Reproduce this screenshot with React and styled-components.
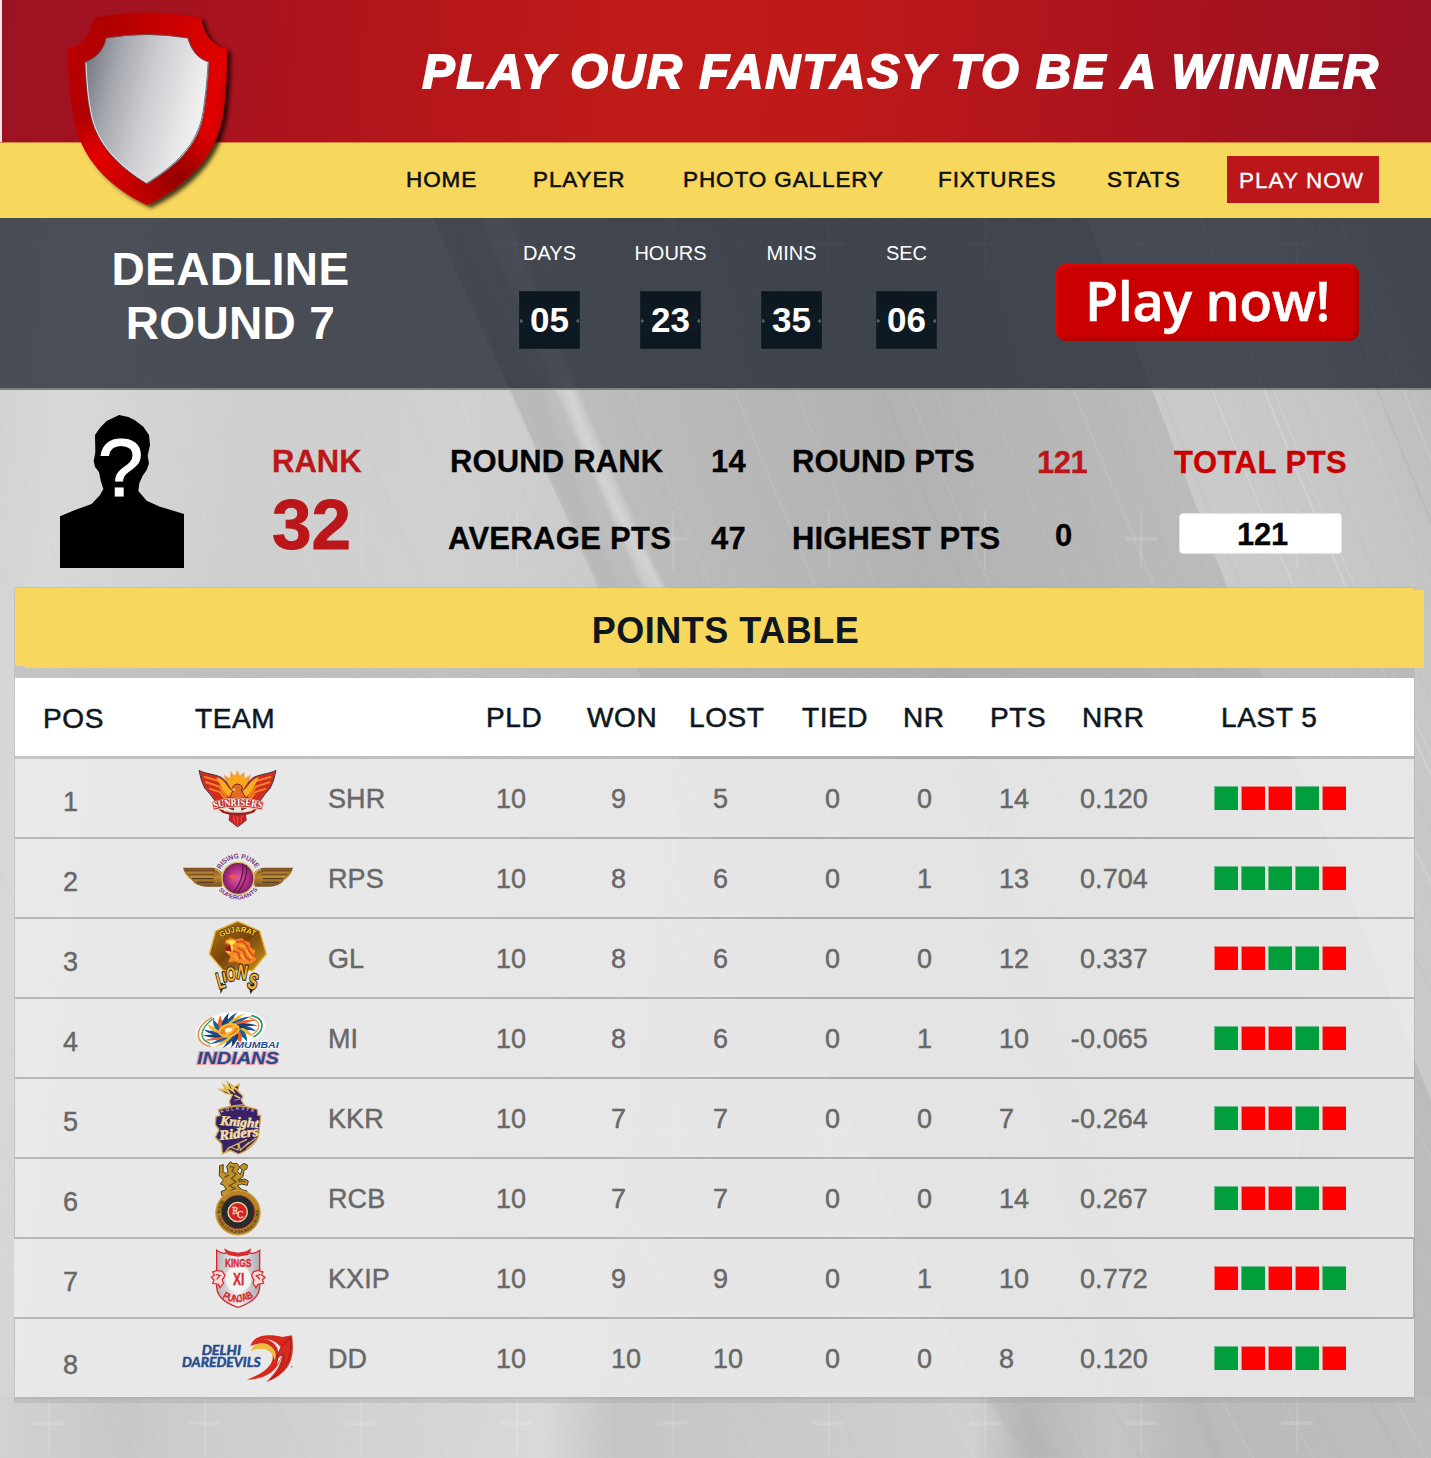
import React from "react";
import styled, { createGlobalStyle, css } from "styled-components";

const Global = createGlobalStyle`
  * { box-sizing: border-box; }
  body { margin: 0; background: #c6c6c6; font-family: "Liberation Sans", Arial, sans-serif; }
  svg { display: block; }
`;

const Page = styled.div`
  position: relative;
  width: 1431px;
  height: 1458px;
  overflow: hidden;
`;

const BackdropSvg = styled.svg`
  position: absolute;
  inset: 0;
  z-index: 0;
`;

const Content = styled.div`
  position: relative;
  z-index: 1;
`;

const Hero = styled.header`
  height: 142px;
  border-left: 2px solid #f1e6e8;
  background: linear-gradient(93deg, #9d1223 0%, #a41320 12%, #b3151b 27%, #bf1b18 44%, #bf1a18 56%, #b6161b 68%, #a8131e 82%, #991123 100%);
  display: flex;
  justify-content: flex-end;
  padding: 43px 51px 0 0;
`;

const Slogan = styled.h1`
  margin: 0;
  color: #fff;
  font: italic 700 48.5px/56px "Liberation Sans", Arial, sans-serif;
  letter-spacing: 1.95px;
  white-space: nowrap;
  -webkit-text-stroke: 1.8px #fff;
`;

const NavBar = styled.nav`
  height: 76px;
  background: #f8d75d;
  border-top: 1px solid #e3823f;
  display: grid;
  grid-template-columns: 127px 150px 255px 169px 120px 152px;
  padding: 13px 0 0 406px;
  align-items: start;
`;

const navText = css`
  font-size: 22.5px;
  line-height: 48px;
  letter-spacing: 0.9px;
  white-space: nowrap;
  text-decoration: none;
`;

const NavLink = styled.a`
  ${navText}
  color: #0c0f12;
  -webkit-text-stroke: 0.55px #0c0f12;
`;

const NavButton = styled.a`
  ${navText}
  height: 47px;
  line-height: 49px;
  padding-left: 12px;
  letter-spacing: 1.05px;
  background: #bb171a;
  color: #fff;
  -webkit-text-stroke: 0.3px #fff;
`;

const ShieldSvg = styled.svg`
  position: absolute;
  left: 55px;
  top: 0;
  z-index: 2;
`;

const Deadline = styled.section`
  height: 172px;
  border-bottom: 2px solid #808080;
  background: rgba(14, 20, 31, 0.7);
  background-clip: padding-box;
  display: flex;
  align-items: flex-start;
`;

const DeadlineTitle = styled.h2`
  margin: 24px 0 0 80px;
  width: 301px;
  color: #fff;
  text-align: center;
  font-size: 46px;
  line-height: 54px;
  font-weight: 700;
  letter-spacing: 0.35px;
`;

const Countdown = styled.div`
  margin: 24px 0 0 138px;
  width: 418px;
  display: grid;
  grid-template-columns: 61px 61px 61px 61px;
  column-gap: 60px;
`;

const Unit = styled.div`
  display: flex;
  flex-direction: column;
  align-items: center;
  margin-left: ${(p) => p.$shift || 0}px;
  width: 61px;
`;

const UnitLabel = styled.span`
  color: #fff;
  font-size: 20px;
  line-height: 23px;
`;

const UnitTile = styled.div`
  margin-top: 26px;
  width: 61px;
  height: 58px;
  background:
    radial-gradient(circle at 2px 30px, #56616a 0 1.3px, transparent 2px),
    radial-gradient(circle at 59px 30px, #56616a 0 1.3px, transparent 2px),
    linear-gradient(#0d161d, #0e1a24 50%, #0b1820);
  box-shadow: inset 0 0 0 1px #17212a;
  color: #fff;
  font-size: 35px;
  line-height: 58px;
  font-weight: 700;
  text-align: center;
`;

const PlayButton = styled.button`
  margin: 46px 0 0 119px;
  width: 303px;
  height: 77px;
  border: 0;
  padding: 0;
  border-radius: 10px;
  background: #ca0000;
  box-shadow: inset 2px 2px 3px #e80508, inset -2px -2px 4px #a00000;
  color: #fff;
  font: 600 54px/70px "Open Sans", "Noto Sans", sans-serif;
  letter-spacing: -0.4px;
  white-space: nowrap;
  -webkit-text-stroke: 0.5px #fff;
`;

const ButtonText = styled.span`
  display: block;
  height: 77px;
  line-height: 73px;
`;

const Summary = styled.section`
  height: 197px;
  display: grid;
  grid-template-columns: 212px 176px 263px 81px 245px 137px 200px;
  padding-left: 60px;
  align-items: start;
`;

const Avatar = styled.svg`
  margin-top: 25px;
`;

const StatColumn = styled.div`
  display: flex;
  flex-direction: column;
  align-items: flex-start;
  gap: 45px;
  padding-top: ${(p) => p.$top || 56}px;
`;

const Stat = styled.span`
  color: ${(p) => p.$color || "#040404"};
  font-size: 31px;
  line-height: 32px;
  font-weight: 700;
  letter-spacing: ${(p) => p.$spacing ?? 0.15}px;
  white-space: nowrap;
  margin-left: ${(p) => p.$indent || 0}px;
  margin-top: ${(p) => p.$lift || 0}px;
  -webkit-text-stroke: 0.3px;
`;

const RankColumn = styled(StatColumn)`
  gap: 9px;
`;

const RankNumber = styled.strong`
  color: #bb171a;
  font-size: 71px;
  line-height: 76px;
  -webkit-text-stroke: 1px #bb171a;
`;

const TotalColumn = styled(StatColumn)`
  gap: 34px;
`;

const TotalBox = styled.div`
  margin-left: 5px;
  width: 163px;
  height: 41px;
  border: 1px solid #e4e4e4;
  border-radius: 4px;
  background: #fff;
  display: flex;
  justify-content: center;
  padding: 5px 0 0 4px;
`;

const TablePanel = styled.main`
  margin-left: 14px;
  width: 1401px;
  height: 816px;
  padding: 1px 1px 0;
  background: rgba(165, 165, 165, 0.38);
`;

const TableTitle = styled.h2`
  position: relative;
  margin: 0;
  width: 1399px;
  height: 78px;
  background: #f8d75d;
  color: #0e171f;
  font-size: 36px;
  line-height: 85px;
  letter-spacing: 0.5px;
  text-align: center;
  &::after {
    content: "";
    position: absolute;
    left: 10px;
    top: 2px;
    width: 1399px;
    height: 78px;
    background: #f8d75d;
  }
`;

const TitleText = styled.span`
  position: relative;
  z-index: 1;
  left: 11px;
`;

const HeadRow = styled.div`
  margin-top: 12px;
  height: 78px;
  background: #fff;
  display: grid;
  grid-template-columns: 152px 291px 101px 102px 113px 101px 87px 92px 139px 178px;
  padding: 0 0 0 28px;
`;

const HeadCell = styled.span`
  color: #0e171f;
  font-size: 28px;
  line-height: ${(p) => (p.$low ? 81 : 79)}px;
  letter-spacing: 0.6px;
  white-space: nowrap;
  -webkit-text-stroke: 0.55px #0e171f;
`;

const Rows = styled.div`
  display: flex;
  flex-direction: column;
  gap: 2px;
  margin-top: 3px;
`;

const Row = styled.div`
  height: 78px;
  margin-left: ${(p) => p.$shift || 0}px;
  width: 1399px;
  background: rgba(244, 244, 244, 0.76);
  display: grid;
  grid-template-columns: 119px 146px 168px 115px 102px 112px 92px 82px 60px 89px 66px 132px;
  padding-left: ${(p) => 48 - (p.$shift || 0)}px;
  align-items: center;
  box-shadow: 0 2px 0 rgba(150, 150, 150, 0.22);
`;

const Cell = styled.span`
  color: #686868;
  font-size: 27px;
  line-height: 30px;
  letter-spacing: 0.1px;
  white-space: nowrap;
  padding-top: ${(p) => p.$drop || 2}px;
  justify-self: ${(p) => (p.$end ? "end" : "start")};
  -webkit-text-stroke: 0.45px #686868;
`;

const Form = styled.div`
  display: flex;
  gap: 3px;
`;

const Result = styled.i`
  width: 24px;
  height: 24px;
  background: ${(p) => (p.$win ? "#009f3c" : "#ff0000")};
  box-shadow: inset 1px 1px 0 ${(p) => (p.$win ? "#6dbd87" : "#ee8484")};
`;

const streaks = Array.from({ length: 84 }, (_, i) => {
  const x = -500 + i * 23 + ((i * 37) % 17);
  const fade = x < 380 ? 0.3 : x > 1060 ? 1.2 : 0.55;
  return { x, o: (0.05 + ((i * 13) % 7) * 0.022) * fade, w: 0.7 + ((i * 11) % 4) * 0.5 };
});
const crossX = [49, 205, 361, 517, 673, 829, 985, 1141, 1297];
const crossY = [244, 539, 834, 1129, 1423];

function Backdrop() {
  return (
    <BackdropSvg width="1431" height="1458" viewBox="0 0 1431 1458" aria-hidden="true">
      <defs>
        <linearGradient id="base" x1="0" y1="0" x2="1" y2=".12">
          <stop offset="0" stopColor="#cfcfcf" />
          <stop offset=".08" stopColor="#d8d8d8" />
          <stop offset=".2" stopColor="#cfcfcf" />
          <stop offset=".36" stopColor="#d0d0d0" />
          <stop offset=".6" stopColor="#c2c2c2" />
          <stop offset="1" stopColor="#c6c6c6" />
        </linearGradient>
        <linearGradient id="shade" gradientUnits="userSpaceOnUse" x1="470" y1="430" x2="1180" y2="250">
          <stop offset="0" stopColor="#c0c0c0" />
          <stop offset=".18" stopColor="#bcbcbc" />
          <stop offset=".55" stopColor="#b2b2b2" />
          <stop offset="1" stopColor="#bcbcbc" />
        </linearGradient>
        <linearGradient id="glow" gradientUnits="userSpaceOnUse" x1="1165" y1="430" x2="1420" y2="330">
          <stop offset="0" stopColor="#cacaca" />
          <stop offset=".6" stopColor="#c6c6c6" />
          <stop offset="1" stopColor="#bcbcbc" />
        </linearGradient>
        <linearGradient id="floor" x1="0" y1="0" x2="1" y2="0">
          <stop offset="0" stopColor="#d2d2d2" />
          <stop offset=".09" stopColor="#c7c7c7" />
          <stop offset=".11" stopColor="#cbcbcb" />
          <stop offset=".38" stopColor="#d9d9d9" />
          <stop offset=".43" stopColor="#c5c5c5" />
          <stop offset=".6" stopColor="#cccccc" />
          <stop offset=".68" stopColor="#d0d0d0" />
          <stop offset=".72" stopColor="#b8b8b8" />
          <stop offset=".78" stopColor="#c5c5c5" />
          <stop offset=".83" stopColor="#bababa" />
          <stop offset="1" stopColor="#bdbdbd" />
        </linearGradient>
        <filter id="soft"><feGaussianBlur stdDeviation="2" /></filter>
      </defs>
      <rect width="1431" height="1458" fill="url(#base)" />
      <path d="M425 200 Q468 300 510 390 L598 587 L980 1397 H1431 V200Z" fill="url(#shade)" />
      <path d="M1080 200 L1152 390 L1227 587 L1431 1100 V200Z" fill="url(#glow)" />
      <path d="M505 200 C535 300 610 470 668 600 L650 600 C595 480 535 340 480 218Z" fill="#d8d8d8" opacity=".6" filter="url(#soft)" />
      <path d="M565 380 C585 450 620 520 668 600" fill="none" stroke="#dadada" strokeWidth="6" opacity=".5" filter="url(#soft)" />
      <path d="M450 218 Q500 330 543 390 Q570 470 620 587 H600 L510 390Z" fill="#b0b0b0" opacity=".35" filter="url(#soft)" />
      <rect y="1397" width="1431" height="61" fill="url(#floor)" />
      <path d="M985 1397 L1028 1458 H1060 L1020 1397Z M1190 1397 L1212 1458 H1225 L1200 1397Z" fill="#b2b2b2" opacity=".4" filter="url(#soft)" />
      {streaks.map((s, i) => (
        <path key={i} d={`M${s.x} 200 q90 260 230 560 t360 700`} fill="none" stroke={i % 3 ? "#fff" : "#a0a0a0"} strokeWidth={s.w} opacity={s.o} />
      ))}
      {crossY.map((y) =>
        crossX.map((x) => {
          const dim = x < 450 && y < 1400 ? 0.35 : 0.9;
          return (
            <g key={`${x}-${y}`} stroke="#fff" opacity={dim}>
              <path d={`M${x} ${y - 29} v60`} strokeWidth="1" opacity=".25" />
              <path d={`M${x - 16} ${y} h32`} strokeWidth="4" opacity=".13" />
            </g>
          );
        })
      )}
    </BackdropSvg>
  );
}

const shieldOutline = "M93 18 Q147 7 201 18 C203 33 212 46 227 49 C227 75 226 94 223 115 C216 158 185 187 147 205 C108 187 81 157 74 120 C70 98 68 75 67 49 C82 46 92 33 93 18Z";

function Shield() {
  return (
    <ShieldSvg width="190" height="216" viewBox="55 0 190 216" aria-hidden="true">
      <defs>
        <linearGradient id="rim" x1="0" y1=".25" x2="1" y2=".5">
          <stop offset="0" stopColor="#bd0000" />
          <stop offset=".18" stopColor="#ae0000" />
          <stop offset=".5" stopColor="#c60000" />
          <stop offset=".92" stopColor="#e20000" />
          <stop offset="1" stopColor="#c60000" />
        </linearGradient>
        <radialGradient id="rimHot" gradientUnits="userSpaceOnUse" cx="98" cy="158" r="46">
          <stop offset="0" stopColor="#e60000" />
          <stop offset="1" stopColor="#e60000" stopOpacity="0" />
        </radialGradient>
        <radialGradient id="rimDark" gradientUnits="userSpaceOnUse" cx="180" cy="180" r="56">
          <stop offset="0" stopColor="#920000" />
          <stop offset="1" stopColor="#920000" stopOpacity="0" />
        </radialGradient>
        <linearGradient id="steel" x1="0" y1=".25" x2="1" y2=".55">
          <stop offset="0" stopColor="#777b87" />
          <stop offset=".22" stopColor="#a5a7ae" />
          <stop offset=".5" stopColor="#cbccd0" />
          <stop offset=".85" stopColor="#ebebec" />
          <stop offset="1" stopColor="#f4f4f4" />
        </linearGradient>
        <filter id="drop" x="-20%" y="-20%" width="150%" height="150%">
          <feDropShadow dx="4" dy="3" stdDeviation="2.2" floodColor="#000" floodOpacity=".75" />
        </filter>
      </defs>
      <g filter="url(#drop)">
        <path d={shieldOutline} fill="url(#rim)" />
      </g>
      <path d={shieldOutline} fill="url(#rimHot)" />
      <path d={shieldOutline} fill="url(#rimDark)" />
      <path d="M106 38 Q147 31 188 38 C191 50 198 59 209 62 C208 82 206 98 204 112 C199 147 174 167 147 184 C119 167 96 145 90 112 C87 96 86 80 85 62 C96 58 104 50 106 38Z" fill="url(#steel)" stroke="#71464a" strokeWidth="1" />
      <path d="M86 63 C87 84 88 98 91 112 C97 145 119 165 147 182" fill="none" stroke="#e4e4e4" strokeWidth="1" />
      <path d="M208 63 C207 84 205 98 203 112 C198 145 174 166 147 183" fill="none" stroke="#6f7880" strokeWidth="1" />
    </ShieldSvg>
  );
}

function Silhouette() {
  return (
    <Avatar width="124" height="153" viewBox="180 600 372 459" role="img" aria-label="player">
      <path d="M357 600 L385 606 L405 616 L430 635 L447 660 L450 690 L443 722 L447 745 L440 765 L428 782 L418 805 L415 828 L440 857 L480 875 L520 887 L552 897 V1059 H180 V904 L225 885 L275 867 L300 840 L310 822 L303 800 L297 772 L285 755 L281 738 L286 712 L285 660 L300 638 L320 618 L345 606Z" fill="#000" />
      <text x="362" y="843" textAnchor="middle" fontSize="246" fontFamily="Liberation Sans, Arial, sans-serif" fill="#fff" stroke="#fff" strokeWidth="3">?</text>
    </Avatar>
  );
}

const Logo = ({ top, label, children }) => (
  <svg width="112" height="78" viewBox={`36 ${top} 336 234`} role="img" aria-label={label}>
    {children}
  </svg>
);

const Sunrisers = () => (
  <Logo top={-3} label="Sunrisers">
    <path d="M154 80 L166 62 L162 44 L180 56 L182 34 L195 50 L202 30 L209 50 L222 36 L224 56 L242 44 L238 62 L252 80Z" fill="#f2953f" stroke="#f8bd75" strokeWidth="2" />
    <circle cx="202" cy="76" r="32" fill="#f9a51d" />
    <path d="M87 31 C106 42 140 43 157 54 C172 65 176 82 188 92 L190 150 L138 126 L118 100 L104 84 L94 60Z" fill="#ce2e1f" stroke="#463a49" strokeWidth="3" />
    <path d="M318 31 C299 42 264 43 248 54 C233 65 229 82 217 92 L215 150 L268 126 L287 100 L301 84 L311 60Z" fill="#ce2e1f" stroke="#463a49" strokeWidth="3" />
    <path d="M102 50 L150 64 L174 100 M106 66 L148 80 L170 112 M118 86 L150 96 L168 122 M304 50 L255 64 L231 100 M300 66 L258 80 L236 112 M288 86 L256 96 L238 122" fill="none" stroke="#f58220" strokeWidth="6" />
    <path d="M139 52 C166 58 169 82 188 94 L190 116 C162 109 153 77 139 52 M267 52 C240 58 237 82 217 94 L215 116 C244 109 252 77 267 52" fill="#fdae20" />
    <path d="M190 88 Q184 75 202 72 Q224 76 214 91 L228 114 H179Z" fill="#e66822" stroke="#7b2420" strokeWidth="3" />
    <path d="M193 83 L185 91 L196 92Z" fill="#ffd144" />
    <path d="M180 158 H226 L229 181 L203 201 L177 181Z" fill="#c82327" stroke="#5b2630" strokeWidth="2" />
    <path d="M203 158 V198 M190 165 L194 188 M217 165 L212 188" stroke="#ed5338" strokeWidth="3" />
    <path d="M142 145 Q203 168 264 145 L250 158 Q203 176 157 158Z" fill="#9a2224" />
    <path d="M162 151 Q203 162 246 151" stroke="#f5d8bd" strokeWidth="4" fill="none" />
    <path d="M126 127 Q203 101 281 127 L276 150 Q203 131 131 150Z" fill="#c6392f" stroke="#f0c2a8" strokeWidth="3" />
    <path id="srArc" d="M132 146 Q203 128 278 146" fill="none" />
    <text fontFamily="Liberation Serif, serif" fontWeight="700" fontSize="30" fill="#fff" stroke="#b9322c" strokeWidth="3" paintOrder="stroke"><textPath href="#srArc" textLength="144" lengthAdjust="spacingAndGlyphs">SUNRISERS</textPath></text>
  </Logo>
);

const Pune = () => (
  <Logo top={237} label="Rising Pune Supergiants">
    <defs>
      <linearGradient id="wing" x1="0" y1="0" x2="0" y2="1"><stop stopColor="#7f4f20" /><stop offset=".5" stopColor="#bd852f" /><stop offset="1" stopColor="#765023" /></linearGradient>
      <radialGradient id="ball"><stop stopColor="#d95ca8" /><stop offset=".65" stopColor="#b42a83" /><stop offset="1" stopColor="#70205a" /></radialGradient>
    </defs>
    <path d="M39 323 H129 Q154 326 162 349 L155 380 H108 Q78 378 66 361 Q44 345 39 323Z M369 323 H281 Q255 326 247 349 L255 380 H300 Q330 378 342 361 Q364 345 369 323Z" fill="url(#wing)" />
    <path d="M48 333 H132 M57 345 H132 M67 356 H130 M82 367 H130 M360 333 H277 M352 345 H277 M340 356 H279 M327 367 H279" stroke="#48321f" strokeWidth="3" />
    <path d="M48 336 H130 M60 348 H130 M360 336 H279 M348 348 H279" stroke="#e0ac52" strokeWidth="2" />
    <path d="M135 328 Q164 335 157 377 M273 328 Q244 335 251 377" fill="none" stroke="#d3ae4e" strokeWidth="4" />
    <circle cx="204" cy="355" r="48" fill="url(#ball)" stroke="#d8bd66" strokeWidth="4" />
    <path d="M219 311 Q222 360 190 397 M229 315 Q235 359 202 399" fill="none" stroke="#541c4a" strokeWidth="4" />
    <path d="M174 347 L197 342 L190 368 L184 355Z" fill="#f4572b" />
    <path id="puneTop" d="M151 329 A60 60 0 0 1 259 329" fill="none" />
    <path id="puneBottom" d="M146 390 A74 74 0 0 0 264 388" fill="none" />
    <g fontFamily="Liberation Sans, sans-serif" fontWeight="700" fill="#7d3a84">
      <text fontSize="21"><textPath href="#puneTop" textLength="130" lengthAdjust="spacingAndGlyphs">RISING PUNE</textPath></text>
      <text fontSize="18"><textPath href="#puneBottom" textLength="135" lengthAdjust="spacingAndGlyphs">SUPERGIANTS</textPath></text>
    </g>
  </Logo>
);

const Lions = () => (
  <Logo top={3} label="Gujarat Lions">
    <defs>
      <linearGradient id="hex" x1="0" y1="0" x2="1" y2="1"><stop stopColor="#b97c16" /><stop offset=".5" stopColor="#75420d" /><stop offset="1" stopColor="#d19a1c" /></linearGradient>
    </defs>
    <path d="M203 10 L269 39 L289 108 L248 158 H160 L118 108 L137 39Z" fill="url(#hex)" stroke="#e7b532" strokeWidth="4" />
    <path d="M203 20 V153 M137 45 L245 151 M267 45 L164 151" stroke="#9b6419" strokeWidth="2" />
    <path d="M165 67 L181 59 L198 64 L216 60 L226 69 L239 73 L242 88 L257 98 L253 113 L260 126 L242 138 L219 140 L195 131 L174 134 L181 115 L165 100 L178 92 L180 82 L166 78Z" fill="#f18b25" stroke="#bb5317" strokeWidth="2" />
    <path d="M197 72 L218 70 L232 84 L238 101 L252 116 M203 90 L220 98 L229 119 L242 128 M187 97 L205 104 L211 124" stroke="#dc4d1d" strokeWidth="6" fill="none" />
    <path d="M208 80 L225 86 M212 108 L224 124 M228 96 L246 120 M194 112 L202 126" stroke="#f9b52c" strokeWidth="4" />
    <path d="M169 70 L187 65 L199 73 L187 80 L190 96 L178 106 L168 101 L181 91 L181 79Z" fill="#ffe34c" />
    <path d="M180 80 L167 89 L170 99 L185 101Z" fill="#a2131a" />
    <path id="lionTop" d="M153 59 Q203 27 255 57" fill="none" />
    <text fontFamily="Liberation Sans, sans-serif" fontWeight="700" fontSize="24" fill="#ffd633" stroke="#4a2b15" strokeWidth="3" paintOrder="stroke"><textPath href="#lionTop" textLength="106" lengthAdjust="spacingAndGlyphs">GUJARAT</textPath></text>
    <path d="M148 196 L158 194 L162 206 L152 228Z M246 196 L258 200 L242 229 L236 206Z" fill="#28262a" />
    <g fontFamily="Liberation Sans, sans-serif" fontWeight="700" fill="#f5b52b" stroke="#28262a" strokeWidth="7" strokeLinejoin="round" paintOrder="stroke">
      <text transform="translate(147 213) rotate(-15) scale(.55 1)" fontSize="68">L</text>
      <text transform="translate(161 192) rotate(-12) scale(.9 1)" fontSize="42">I</text>
      <text transform="translate(171 190) rotate(-6) scale(.62 1)" fontSize="58">O</text>
      <text transform="translate(199 181) rotate(10) scale(.68 1)" fontSize="62">N</text>
      <text transform="translate(229 208) rotate(17) scale(.66 1)" fontSize="66">S</text>
    </g>
  </Logo>
);

const Mumbai = () => (
  <Logo top={243} label="Mumbai Indians">
    <ellipse cx="182" cy="334" rx="105" ry="52" transform="rotate(-8 182 334)" fill="#fff" />
    <path d="M126 298 C70 329 73 374 122 386" fill="none" stroke="#e98635" strokeWidth="4" />
    <path d="M132 300 C82 337 89 365 121 377" fill="none" stroke="#259e6b" strokeWidth="4" />
    <path d="M244 293 C288 301 283 342 250 357" fill="none" stroke="#159b65" strokeWidth="5" />
    <path d="M239 300 C279 310 269 340 244 350" fill="none" stroke="#eb8d45" strokeWidth="4" />
    <g transform="rotate(-14 180 337)">
      {Array.from({ length: 20 }, (_, i) => (
        <path key={i} transform={`translate(180 337) scale(1.06 .66) rotate(${i * 18})`} d="M8 -8 C34 -20 60 4 72 34 C54 16 34 10 10 12Z" fill={["#1e4e8e", "#f2b632", "#1d5f96", "#e8622c", "#163f72"][i % 5]} />
      ))}
    </g>
    <ellipse cx="177" cy="337" rx="33" ry="21" transform="rotate(-14 177 337)" fill="#f9bb34" />
    <path d="M148 346 Q160 318 196 322 Q172 328 164 350Z M206 330 Q200 352 166 354 Q192 346 194 330Z" fill="#ef7d2c" />
    <ellipse cx="175" cy="336" rx="11" ry="7" transform="rotate(-14 175 336)" fill="#fff6d8" />
    <g fontFamily="Liberation Sans, sans-serif" fontStyle="italic" fontWeight="700" fill="#1e4c91" paintOrder="stroke">
      <text x="196" y="389" fontSize="26" textLength="130" lengthAdjust="spacingAndGlyphs" stroke="#fff" strokeWidth="4">MUMBAI</text>
      <text x="81" y="437" fontSize="52" textLength="245" lengthAdjust="spacingAndGlyphs" stroke="#f29ca6" strokeWidth="6">INDIANS</text>
    </g>
  </Logo>
);

const Knight = () => (
  <Logo top={3} label="Kolkata Knight Riders">
    <path d="M184 91 L178 70 L187 50 L166 46 L148 34 L167 35 L159 19 L180 32 L171 12 L194 27 L208 18 L203 39 L219 54 L214 66 L228 91Z" fill="#3a2266" stroke="#d9b552" strokeWidth="4" />
    <path d="M154 33 L177 43 L165 23 L191 41 L184 25 L202 36 M193 52 L211 61" fill="none" stroke="#edc956" strokeWidth="5" />
    <path d="M192 67 L218 62 M188 83 L223 79" stroke="#a68dc0" strokeWidth="3" />
    <path d="M145 95 Q203 73 262 95 L264 112 L272 112 L269 144 L265 174 Q250 211 206 228 L181 217 L157 227 L155 198 L136 178 L147 155 L136 140 L138 116 L151 112Z" fill="#392167" stroke="#cfa647" strokeWidth="4" />
    <path d="M172 212 L231 184 M166 222 L180 207 L204 216 L206 195 L211 217 L238 192 M226 204 L258 180 M230 213 L261 187" stroke="#d4b55e" strokeWidth="4" fill="none" />
    <path id="knightArc" d="M153 105 Q203 87 256 105" fill="none" />
    <text fontFamily="Liberation Sans, sans-serif" fontWeight="700" fontSize="13" fill="#ddc8aa"><textPath href="#knightArc" textLength="99">KOLKATA</textPath></text>
    <g fontFamily="Liberation Serif, serif" fontWeight="700" fontStyle="italic" fill="#f3e0a0" stroke="#f3e0a0" strokeWidth="1.6">
      <text transform="translate(150 140) rotate(5)" fontSize="40" textLength="114" lengthAdjust="spacingAndGlyphs">Knight</text>
      <text transform="translate(149 186) rotate(-6)" fontSize="42" textLength="118" lengthAdjust="spacingAndGlyphs">Riders</text>
    </g>
  </Logo>
);

const Royals = () => (
  <Logo top={243} label="Royal Challengers Bangalore">
    <path d="M178 356 L156 354 L153 341 L169 334 L160 321 L151 318 L160 306 L148 293 L149 263 L160 260 L159 282 L169 287 L174 279 L170 266 L181 251 L189 257 L201 256 L209 268 L202 280 L211 289 L216 276 L208 266 L222 256 L232 261 L231 272 L222 277 L219 296 L204 306 L224 303 L235 309 L232 322 L214 318 L202 323 L216 335 L231 339 L231 350 L214 354 L198 336 L190 345 L194 357Z" fill="#c2912a" stroke="#45412b" strokeWidth="3" />
    <path d="M179 266 L192 268 L186 280 L198 288 L184 302 L198 312 L178 323 L195 331 L170 348 M163 299 L178 290 M206 309 L227 311 M205 335 L223 347" fill="none" stroke="#625323" strokeWidth="4" />
    <circle cx="204" cy="404" r="67" fill="#b78526" stroke="#d3a44a" strokeWidth="3" />
    <circle cx="204" cy="402" r="50" fill="#282b2b" stroke="#bd2428" strokeWidth="2" />
    <circle cx="203" cy="402" r="29" fill="#d2252b" stroke="#f5d8a0" strokeWidth="4" />
    <path id="royalRing" d="M155 366 A62 62 0 1 0 253 366" fill="none" />
    <text fontFamily="Liberation Serif, serif" fontWeight="700" fontSize="14" fill="#3d321c"><textPath href="#royalRing" textLength="246">ROYAL CHALLENGERS BANGALORE</textPath></text>
    <g fontFamily="Liberation Serif, serif" fontSize="31" fill="#f7e8c8" stroke="#f7e8c8" strokeWidth=".8">
      <text x="187" y="409" textLength="18" lengthAdjust="spacingAndGlyphs">R</text>
      <text x="202" y="419" textLength="18" lengthAdjust="spacingAndGlyphs">C</text>
    </g>
  </Logo>
);

const Kings = () => (
  <Logo top={3} label="Kings XI Punjab">
    <defs><linearGradient id="silver"><stop stopColor="#b5b5b9" /><stop offset=".5" stopColor="#f5f5f5" /><stop offset="1" stopColor="#aaaab0" /></linearGradient></defs>
    <path d="M140 37 Q154 49 170 45 L166 35 L179 42 L204 46 L229 42 L240 35 L238 45 Q253 49 269 37 V148 Q267 188 204 208 Q143 188 140 148Z" fill="url(#silver)" stroke="#d8282e" strokeWidth="4" />
    <path d="M166 35 L179 42 L204 46 L229 42 L240 35 L235 51 L204 56 L174 51Z" fill="#d92c30" />
    <path d="M143 97 L128 102 L133 111 L124 118 L132 126 L128 136 L145 139 L150 149 L160 136 L157 125 L165 113 L158 101Z M264 97 L279 102 L275 111 L285 118 L277 126 L281 136 L264 139 L258 149 L249 136 L252 125 L244 113 L251 101Z" fill="#f4d9d9" stroke="#dc3237" strokeWidth="4" />
    <path d="M137 109 L150 113 L140 124 M271 109 L259 113 L270 124" fill="none" stroke="#d8282e" strokeWidth="4" />
    <circle cx="205" cy="123" r="39" fill="#f4f4f4" />
    <g fontFamily="Liberation Sans, sans-serif" fontWeight="700" fill="#d8282e" stroke="#d8282e" strokeWidth="1">
      <text x="165" y="87" fontSize="31" textLength="79" lengthAdjust="spacingAndGlyphs">KINGS</text>
      <text x="189" y="142" fontSize="50" textLength="34" lengthAdjust="spacingAndGlyphs">XI</text>
      <path id="kingArc" d="M157 179 Q204 209 256 173" fill="none" stroke="none" />
      <text fontSize="31"><textPath href="#kingArc" textLength="100" lengthAdjust="spacingAndGlyphs">PUNJAB</textPath></text>
    </g>
  </Logo>
);

const Delhi = () => (
  <Logo top={243} label="Delhi Daredevils">
    <g fontFamily="Lato, sans-serif" fontWeight="700" fontStyle="italic" fill="#264b8e" stroke="#264b8e" strokeWidth="1.4">
      <text x="95" y="351" fontSize="39" textLength="118" lengthAdjust="spacingAndGlyphs">DELHI</text>
      <text x="36" y="388" fontSize="39" textLength="236" lengthAdjust="spacingAndGlyphs">DAREDEVILS</text>
    </g>
    <path d="M241 324 C280 306 312 332 308 362 C302 388 278 407 230 425 C292 424 334 392 338 335 C330 300 262 288 241 324Z" fill="#d9291f" />
    <path d="M242 339 C253 314 281 307 304 326 C321 340 319 357 314 366 C306 336 282 323 242 339Z" fill="#efbd3b" />
    <path d="M249 312 C272 296 306 300 322 330 Q330 358 320 382 Q341 355 333 325 Q321 292 270 298Z" fill="#ececec" />
    <path d="M241 324 C250 289 301 287 337 297 L366 292 C371 330 370 362 351 389 Q329 418 289 432 C322 400 338 372 336 338 C328 304 270 288 241 324Z" fill="#d9291f" />
    <path d="M362 298 C342 316 325 333 321 362 Q337 343 344 354 Q338 394 303 424 C353 394 367 352 362 298Z" fill="#d9291f" stroke="#8f2020" strokeWidth="3" />
    <circle cx="365" cy="386" r="2.5" fill="#c77575" />
  </Logo>
);

const heads = ["POS", "TEAM", "PLD", "WON", "LOST", "TIED", "NR", "PTS", "NRR", "LAST 5"];
const teams = [
  [1, Sunrisers, "SHR", 10, 9, 5, 0, 0, 14, "0.120", "WLLWL"],
  [2, Pune, "RPS", 10, 8, 6, 0, 1, 13, "0.704", "WWWWL"],
  [3, Lions, "GL", 10, 8, 6, 0, 0, 12, "0.337", "LLWWL"],
  [4, Mumbai, "MI", 10, 8, 6, 0, 1, 10, "-0.065", "WLLWL"],
  [5, Knight, "KKR", 10, 7, 7, 0, 0, 7, "-0.264", "WLLWL"],
  [6, Royals, "RCB", 10, 7, 7, 0, 0, 14, "0.267", "WLLWL"],
  [7, Kings, "KXIP", 10, 9, 9, 0, 1, 10, "0.772", "LWLLW"],
  [8, Delhi, "DD", 10, 10, 10, 0, 0, 8, "0.120", "WLLWL"],
];

function TeamRow({ team }) {
  const [pos, Crest, name, ...rest] = team;
  const form = rest[rest.length - 1];
  const nrr = rest[rest.length - 2];
  return (
    <Row $shift={pos === 7 ? -1 : 0}>
      <Cell $drop={pos === 8 ? 13 : 7}>{pos}</Cell>
      <Crest />
      <Cell>{name}</Cell>
      {rest.slice(0, 6).map((value, i) => <Cell key={i}>{value}</Cell>)}
      <Cell $end>{nrr}</Cell>
      <span />
      <Form>{form.split("").map((r, i) => <Result key={i} $win={r === "W"} />)}</Form>
    </Row>
  );
}

export default function App() {
  return (
    <Page>
      <Global />
      <Backdrop />
      <Content>
        <Hero><Slogan>PLAY OUR FANTASY TO BE A WINNER</Slogan></Hero>
        <NavBar>
          <NavLink>HOME</NavLink>
          <NavLink>PLAYER</NavLink>
          <NavLink>PHOTO GALLERY</NavLink>
          <NavLink>FIXTURES</NavLink>
          <NavLink>STATS</NavLink>
          <NavButton>PLAY NOW</NavButton>
        </NavBar>
        <Shield />
        <Deadline>
          <DeadlineTitle>DEADLINE<br />ROUND 7</DeadlineTitle>
          <Countdown>
            <Unit><UnitLabel>DAYS</UnitLabel><UnitTile>05</UnitTile></Unit>
            <Unit><UnitLabel>HOURS</UnitLabel><UnitTile>23</UnitTile></Unit>
            <Unit><UnitLabel>MINS</UnitLabel><UnitTile>35</UnitTile></Unit>
            <Unit $shift={-6}><UnitLabel>SEC</UnitLabel><UnitTile>06</UnitTile></Unit>
          </Countdown>
          <PlayButton><ButtonText>Play now!</ButtonText></PlayButton>
        </Deadline>
        <Summary>
          <Silhouette />
          <RankColumn>
            <Stat $color="#bb171a" $spacing={0}>RANK</Stat>
            <RankNumber>32</RankNumber>
          </RankColumn>
          <StatColumn>
            <Stat $indent={2}>ROUND RANK</Stat>
            <Stat $spacing={0.3}>AVERAGE PTS</Stat>
          </StatColumn>
          <StatColumn><Stat>14</Stat><Stat>47</Stat></StatColumn>
          <StatColumn><Stat $spacing={0}>ROUND PTS</Stat><Stat>HIGHEST PTS</Stat></StatColumn>
          <StatColumn $top={57}>
            <Stat $color="#bb171a" $spacing={-0.5}>121</Stat>
            <Stat $indent={18} $lift={-4}>0</Stat>
          </StatColumn>
          <TotalColumn $top={57}>
            <Stat $color="#ca0000" $spacing={0.5}>TOTAL PTS</Stat>
            <TotalBox><Stat $spacing={-0.3}>121</Stat></TotalBox>
          </TotalColumn>
        </Summary>
        <TablePanel>
          <TableTitle><TitleText>POINTS TABLE</TitleText></TableTitle>
          <HeadRow>
            {heads.map((h, i) => <HeadCell key={h} $low={i < 2}>{h}</HeadCell>)}
          </HeadRow>
          <Rows>{teams.map((t) => <TeamRow key={t[0]} team={t} />)}</Rows>
        </TablePanel>
      </Content>
    </Page>
  );
}
